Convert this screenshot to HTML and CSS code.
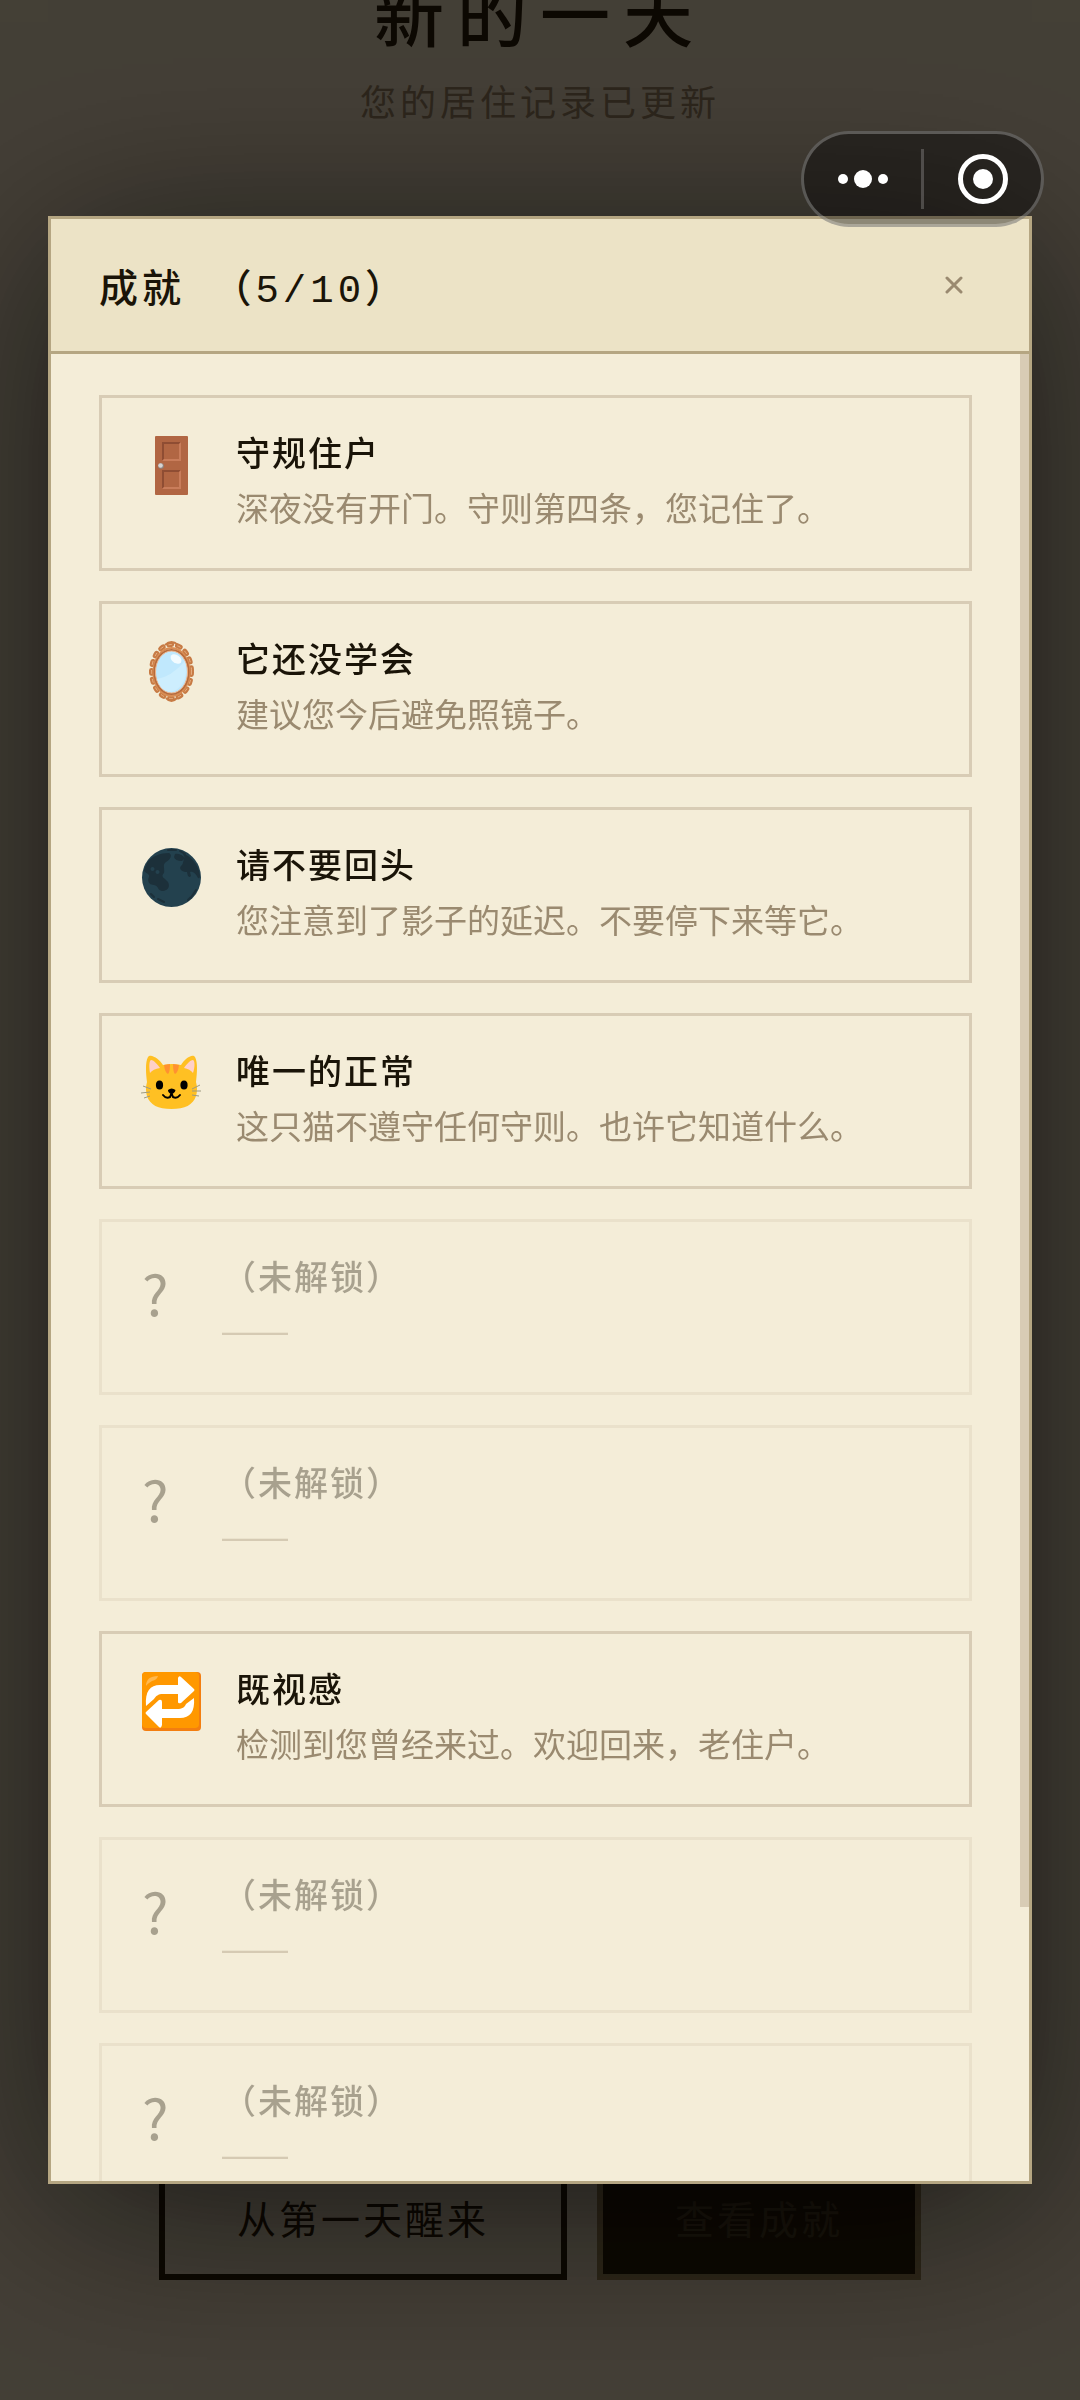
FILE: index.html
```html
<!DOCTYPE html>
<html lang="zh-CN">
<head>
    <meta charset="UTF-8">
    <meta name="viewport" content="width=device-width, initial-scale=1.0">
    <title>新的一天</title>
    <link rel="stylesheet" href="styles.css">
</head>
<body>
<main class="page">
    <header class="intro">
        <h1>新的一天</h1>
        <p>您的居住记录已更新</p>
    </header>
    <div class="actions">
        <button type="button" class="btn">从第一天醒来</button>
        <button type="button" class="btn btn-dark">查看成就</button>
    </div>
</main>

<div class="overlay">
    <section class="modal" role="dialog" aria-labelledby="modalTitle">
        <div class="modal-header">
            <h2 id="modalTitle">成就<span class="count"> （5/10）</span></h2>
            <button type="button" class="close" aria-label="关闭">
                <svg width="18" height="18" viewBox="0 0 18 18"><path d="M2 2L16 16M16 2L2 16" stroke="currentColor" stroke-width="3" stroke-linecap="round"/></svg>
            </button>
        </div>
        <div class="modal-body">
            <ul class="list">
                <li class="card">
                    <div class="icon">
                        <svg viewBox="0 0 60 60">
                            <rect x="13" y="0" width="33" height="59" rx="1" fill="#b16643"/>
                            <path d="M20 6H39L37 8H22V23L20 25Z" fill="#8f4d33"/>
                            <path d="M39 6V25H20L22 23H37V8Z" fill="#c97d5b"/>
                            <path d="M20 34H39L37 36H22V51L20 53Z" fill="#8f4d33"/>
                            <path d="M39 34V53H20L22 51H37V36Z" fill="#c97d5b"/>
                            <circle cx="19" cy="30" r="2.8" fill="#8b8583"/>
                            <circle cx="18.500" cy="29.500" r="2.300" fill="#d8d4d2"/>
                        </svg>
                    </div>
                    <div class="text">
                        <h3>守规住户</h3>
                        <p>深夜没有开门。守则第四条，您记住了。</p>
                    </div>
                </li>
                <li class="card">
                    <div class="icon">
                        <svg viewBox="0 0 60 60">
                            <ellipse cx="29.500" cy="29.500" rx="20" ry="27" fill="none" stroke="#c77b45" stroke-width="5" stroke-linecap="round" stroke-dasharray="3 6"/>
                            <ellipse cx="29.500" cy="29.500" rx="20" ry="27" fill="none" stroke="#e8b184" stroke-width="1" stroke-linecap="round" stroke-dasharray="3 6"/>
                            <ellipse cx="29.500" cy="30" rx="18" ry="24" fill="none" stroke="#d98d54" stroke-width="2"/>
                            <path d="M23 3Q29.500 -3 36 3M24 56Q29.500 62 35 56" fill="none" stroke="#c77b45" stroke-width="2"/>
                            <ellipse cx="29.500" cy="30" rx="17" ry="22" fill="#b5e2fb" stroke="#b76b3c" stroke-width="2"/>
                            <ellipse cx="29.500" cy="30" rx="16" ry="21" fill="#c0e8fd" stroke="#efb083" stroke-width="1"/>
                            <path d="M15 37Q29 35 43 19Q47 40 34 48Q20 54 15 37Z" fill="#cdeefe"/>
                            <ellipse cx="34" cy="17" rx="6" ry="4" transform="rotate(35 34 17)" fill="#f2fbff"/>
                        </svg>
                    </div>
                    <div class="text">
                        <h3>它还没学会</h3>
                        <p>建议您今后避免照镜子。</p>
                    </div>
                </li>
                <li class="card">
                    <div class="icon">
                        <svg viewBox="0 0 60 60">
                            <circle cx="29.500" cy="29.500" r="29.500" fill="#23414e"/>
                            <path d="M5 15C9 8 19 5 27 5C31 7 28 12 24 14C20 17 23 20 22 25C18 29 23 30 26 34C29 40 24 43 20 43C15 42 17 38 12 37C7 37 5 33 7 29C8 25 3 26 2 22Z" fill="#1c303a"/>
                            <circle cx="10.500" cy="21" r="2" fill="#23414e"/>
                            <circle cx="15.500" cy="24" r="2" fill="#23414e"/>
                            <path d="M33 6C38 5 41 8 43 10L40 13Q33 13 32 9ZM41 6C49 8 56 16 58 27Q58 31 56 30C54 26 51 23 48 24L49 28Q46 31 45 24C39 24 36 20 40 17C42 14 41 11 43 10Z" fill="#1c303a"/>
                            <path d="M26 2H34M38 3L43 6M16 51L22 54M50 48L54 42M46 52L49 49M9 46L12 49" fill="none" stroke="#1c303a" stroke-width="2" stroke-linecap="round"/>
                        </svg>
                    </div>
                    <div class="text">
                        <h3>请不要回头</h3>
                        <p>您注意到了影子的延迟。不要停下来等它。</p>
                    </div>
                </li>
                <li class="card">
                    <div class="icon">
                        <svg viewBox="0 0 60 60">
                            <path d="M5 28C4 20 3 8 6 3C9 -1 18 6 21 11Q30 9 39 11C42 6 50 -1 53 3C56 8 55 20 54 28Q56 35 54 42C51 51 43 55 29.500 55C16 55 8 51 5 42Q3 35 5 28Z" fill="#ffc023"/>
                            <path d="M8 19C7 13 7 7 9 6C12 6 16 11 18 14Q11 15 8 19ZM51 19C53 13 53 7 51 6C48 6 44 11 42 14Q48 15 51 19Z" fill="#ffd0c9"/>
                            <path d="M22 11L28 10Q28 18 26 20Q23 19 22 11ZM31 10L37 11Q36 19 33 20Q31 18 31 10Z" fill="#ff9131"/>
                            <ellipse cx="17.500" cy="31" rx="3.600" ry="4.500" fill="#000"/>
                            <ellipse cx="42" cy="31" rx="3.600" ry="4.500" fill="#000"/>
                            <path d="M26 36Q29.500 33 33.500 36Q33 39 29.500 40Q26 39 26 36Z" fill="#000"/>
                            <path d="M21 41Q24 45 28 43L29.500 39L31 43Q35 45 38 41" fill="none" stroke="#000" stroke-width="2" stroke-linecap="round"/>
                            <path d="M9 35L1 32M8 38L-1 39M8 42L2 44M50 35L58 31M50 37L59 37M50 41L57 42" fill="none" stroke="#9d9a80" stroke-width="1"/>
                        </svg>
                    </div>
                    <div class="text">
                        <h3>唯一的正常</h3>
                        <p>这只猫不遵守任何守则。也许它知道什么。</p>
                    </div>
                </li>
                <li class="card locked">
                    <div class="icon">?</div>
                    <div class="text">
                        <h3>（未解锁）</h3>
                        <p>——</p>
                    </div>
                </li>
                <li class="card locked">
                    <div class="icon">?</div>
                    <div class="text">
                        <h3>（未解锁）</h3>
                        <p>——</p>
                    </div>
                </li>
                <li class="card">
                    <div class="icon">
                        <svg viewBox="0 0 60 60">
                            <rect width="59" height="59" rx="4" fill="#f37e10"/>
                            <rect width="57" height="56" rx="4" fill="#ff9800"/>
                            <path d="M4 14Q4 4 16 4Q15 8 10 9Q5 12 4 14Z" fill="#ffb84d"/>
                            <path d="M4 34C3 19 8 13 18 13H36V6Q37 3 39 5L52 17Q53 18 52 19L39 31Q36 32 36 30V22H21C16 22 14 24 12 27Z" fill="#fff"/>
                            <path d="M52 26C53 40 48 46 38 46H20V53Q19 57 17 55L4 42Q3 41 4 40L17 28Q20 27 20 30V37H35C40 37 43 35 44 32Z" fill="#fff"/>
                        </svg>
                    </div>
                    <div class="text">
                        <h3>既视感</h3>
                        <p>检测到您曾经来过。欢迎回来，老住户。</p>
                    </div>
                </li>
                <li class="card locked">
                    <div class="icon">?</div>
                    <div class="text">
                        <h3>（未解锁）</h3>
                        <p>——</p>
                    </div>
                </li>
                <li class="card locked">
                    <div class="icon">?</div>
                    <div class="text">
                        <h3>（未解锁）</h3>
                        <p>——</p>
                    </div>
                </li>
                <li class="card locked">
                    <div class="icon">?</div>
                    <div class="text">
                        <h3>（未解锁）</h3>
                        <p>——</p>
                    </div>
                </li>
            </ul>
            <div class="scrollbar"><div class="thumb"></div></div>
        </div>
    </section>
</div>

<div class="capsule">
    <button type="button" aria-label="更多">
        <svg width="52" height="52" viewBox="0 0 52 52" fill="#fff"><circle cx="6" cy="26" r="5"/><circle cx="26" cy="26" r="9"/><circle cx="46" cy="26" r="5"/></svg>
    </button>
    <button type="button" aria-label="退出">
        <svg width="52" height="52" viewBox="0 0 52 52"><circle cx="26" cy="26" r="22.500" fill="none" stroke="#fff" stroke-width="5"/><circle cx="26" cy="26" r="10" fill="#fff"/></svg>
    </button>
</div>
</body>
</html>
```

FILE: styles.css
```css
* {
    box-sizing: border-box;
}
body {
    font-family: "Noto Sans CJK SC", sans-serif;
    background-color: #f4edd8;
    color: #1a1408;
    margin: 0;
    height: 100vh;
    overflow: hidden;
}
h1, h2, h3, p, ul {
    margin: 0;
    padding: 0;
}
button {
    font-family: inherit;
    cursor: pointer;
}

/* page behind the dialog */
.page {
    display: flex;
    flex-direction: column;
    justify-content: space-between;
    height: 100vh;
    padding-bottom: 120px;
}
.intro {
    margin-top: -36px;
    text-align: center;
}
.intro h1 {
    font-size: 70px;
    font-weight: 500;
    line-height: 96px;
    letter-spacing: 13px;
}
.intro p {
    margin-top: 13px;
    font-size: 36px;
    line-height: 54px;
    letter-spacing: 4px;
    color: #9a8a70;
}
.actions {
    display: flex;
    justify-content: center;
    gap: 30px;
}
.btn {
    height: 120px;
    padding: 0 72px 6px;
    border: 6px solid #1a1408;
    background: transparent;
    color: #1a1408;
    font-size: 39px;
    letter-spacing: 3px;
}
.btn-dark {
    background: #1a1408;
    border-color: #9a8a60;
    color: #453e2a;
}

/* dialog */
.overlay {
    position: fixed;
    inset: 0;
    display: flex;
    align-items: center;
    padding: 0 48px;
    background: rgba(10, 6, 0, 0.75);
}
.modal {
    display: flex;
    flex-direction: column;
    width: 100%;
    height: 82vh;
    border: 3px solid #b5a682;
    background: #f4edd8;
    box-shadow: 0 24px 180px rgba(0, 0, 0, 0.6);
}
.modal-header {
    display: flex;
    align-items: center;
    justify-content: space-between;
    padding: 36px 48px;
    border-bottom: 3px solid #b5a682;
    background: #ece3c6;
}
.modal-header h2 {
    font-size: 39px;
    font-weight: 500;
    line-height: 60px;
    letter-spacing: 4px;
}
.count {
    font-family: "Liberation Mono", "Noto Sans CJK SC", monospace;
    line-height: 1;
}
.close {
    display: flex;
    align-items: center;
    justify-content: center;
    width: 54px;
    height: 54px;
    padding: 0;
    border: none;
    background: none;
    color: #9a8a70;
}
.modal-body {
    flex: 1;
    display: flex;
    min-height: 0;
    overflow: hidden;
}
.scrollbar {
    width: 9px;
}
.thumb {
    height: 85%;
    background: #d8ccb5;
}
.list {
    flex: 1;
    padding: 41px 48px;
    list-style: none;
}
.card {
    display: flex;
    gap: 30px;
    height: 176px;
    margin-bottom: 30px;
    padding: 30px 36px;
    border: 3px solid #d8ccb5;
}
.icon {
    flex: none;
    width: 68px;
    padding: 8px 4px;
}
.icon svg {
    display: block;
    width: 60px;
    height: 60px;
    overflow: visible;
}
.text h3 {
    font-size: 34px;
    font-weight: 500;
    line-height: 48px;
    letter-spacing: 2px;
}
.text p {
    margin-top: 6px;
    font-size: 33px;
    line-height: 50px;
    color: #9a8a70;
}
.locked {
    opacity: 0.35;
}
.locked .icon {
    width: 54px;
    font-size: 56px;
    line-height: 64px;
}
.locked p {
    font-family: "Liberation Sans", sans-serif;
}

/* floating menu capsule */
.capsule {
    position: fixed;
    top: 131px;
    right: 36px;
    display: flex;
    align-items: center;
    width: 243px;
    height: 96px;
    border: 3px solid rgba(255, 255, 255, 0.25);
    border-radius: 48px;
    background: rgba(0, 0, 0, 0.4);
}
.capsule button {
    flex: 1;
    display: flex;
    align-items: center;
    justify-content: center;
    height: 60px;
    padding: 0;
    border: none;
    background: none;
}
.capsule button + button {
    border-left: 3px solid rgba(255, 255, 255, 0.2);
}
```
